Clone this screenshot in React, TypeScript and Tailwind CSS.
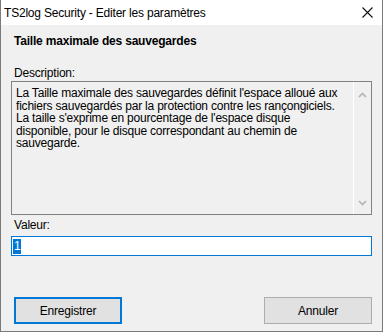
const FONT = "font-['Liberation_Sans',Arial,sans-serif] tracking-[-0.2px]";

function ChevronUp() {
  return (
    <svg width="9" height="6" viewBox="0 0 9 6" className="block">
      <path d="M1 5 L4.5 1.5 L8 5" fill="none" stroke="#b4b4b4" strokeWidth="1.6" />
    </svg>
  );
}

function ChevronDown() {
  return (
    <svg width="9" height="6" viewBox="0 0 9 6" className="block">
      <path d="M1 1 L4.5 4.5 L8 1" fill="none" stroke="#b4b4b4" strokeWidth="1.6" />
    </svg>
  );
}

export default function App() {
  return (
    <div className={`w-[384px] h-[333px] bg-white text-black ${FONT}`}>
      <div className="w-[383px] h-[332px] flex flex-col border-x border-b border-[#7a7a7a]">
        {/* title bar */}
        <div className="h-[25px] bg-white flex items-center justify-between pl-[3px] pr-[9px]">
          <span className="text-[12px] leading-none">TS2log Security - Editer les paramètres</span>
          <svg width="11" height="11" viewBox="0 0 11 11" className="block">
            <path d="M0.5 0.5 L10.5 10.5 M10.5 0.5 L0.5 10.5" stroke="#111" strokeWidth="1.1" />
          </svg>
        </div>

        {/* body */}
        <div className="flex-1 bg-[#f0f0f0] flex flex-col px-[10px]">
          <h1 className="ml-[3px] mt-[9px] text-[12px] font-bold leading-[14px]">Taille maximale des sauvegardes</h1>

          <p className="ml-[3px] mt-[18px] text-[12px] leading-[14px]">Description:</p>
          <div className="mt-[1px] h-[134px] border border-[#828282] flex">
            <div className="flex-1 pl-[4px] pt-[5px] pr-1 text-[12px] leading-[12.5px] whitespace-nowrap">
              La Taille maximale des sauvegardes définit l'espace alloué aux
              <br />
              fichiers sauvegardés par la protection contre les rançongiciels.
              <br />
              La taille s'exprime en pourcentage de l'espace disque
              <br />
              disponible, pour le disque correspondant au chemin de
              <br />
              sauvegarde.
            </div>
            <div className="w-[18px] border-l border-white flex flex-col items-center justify-between pt-[10px] pb-[8px]">
              <ChevronUp />
              <ChevronDown />
            </div>
          </div>

          <p className="ml-[3px] mt-[3px] text-[12px] leading-[14px]">Valeur:</p>
          <div className="mt-[4px] h-[20px] border border-[#0078d7] bg-white flex items-center pl-[1px]">
            <span className="bg-[#0078d7] text-white text-[12px] leading-[15px] px-[1px]">1</span>
          </div>

          <div className="mt-[41px] flex justify-between">
            <button className="ml-[3px] w-[108px] h-[27px] bg-[#e1e1e1] border-2 border-[#0078d7] text-[12px]">
              Enregistrer
            </button>
            <button className="w-[108px] h-[27px] bg-[#e1e1e1] border border-[#adadad] text-[12px]">
              Annuler
            </button>
          </div>
        </div>
      </div>
    </div>
  );
}
